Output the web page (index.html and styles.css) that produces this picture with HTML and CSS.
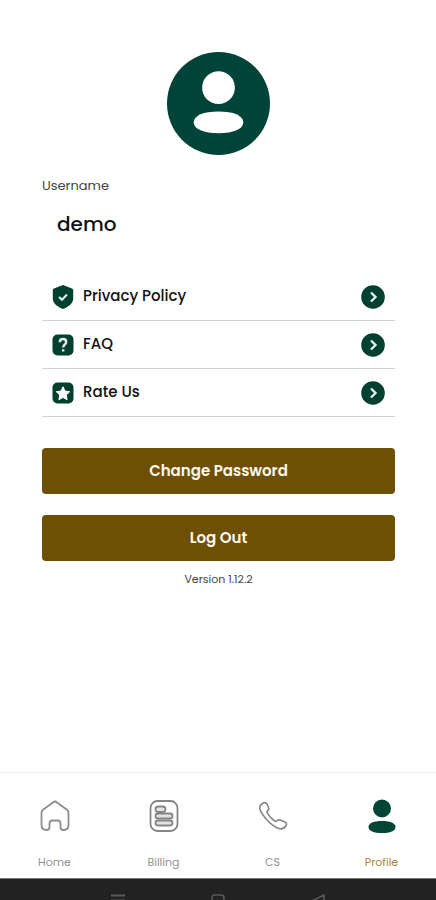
FILE: index.html
```html
<!DOCTYPE html>
<html lang="en">
<head>
<meta charset="utf-8">
<meta name="viewport" content="width=device-width, initial-scale=1">
<title>Profile</title>
<link rel="stylesheet" href="styles.css">
</head>
<body>
<main class="content">
  <svg class="avatar" viewBox="0 0 104 104" aria-hidden="true">
    <circle cx="52" cy="52" r="52" fill="#004337"/>
    <circle cx="52" cy="36" r="16.5" fill="#fff"/>
    <path d="M52 60c15 0 25 4 25 11s-10 11-25 11-25-4-25-11 10-11 25-11z" fill="#fff"/>
  </svg>
  <p class="label">Username</p>
  <h1 class="username">demo</h1>

  <ul class="menu">
    <li><a class="menu-link" href="#privacy">
      <svg class="menu-icon" viewBox="0 0 22 26" aria-hidden="true">
        <path d="M11 1l9 3.600q1.200.5 1.200 1.900v8.200c0 4.800-5 8.100-10.200 10.400C5.800 22.800.8 19.500.8 14.700V6.500Q.8 5.100 2 4.600z" fill="#00402f"/>
        <path d="M7 13l3 2.800 5-5.300" fill="none" stroke="#e4f0e7" stroke-width="2"/>
      </svg>
      <span class="menu-text">Privacy Policy</span>
      <svg class="chevron" viewBox="0 0 24 24" aria-hidden="true"><circle cx="12" cy="12" r="11.800" fill="#00402f"/><path d="M10 7.500l4.500 4.500-4.500 4.500" fill="none" stroke="#e4f0e7" stroke-width="2.400"/></svg>
    </a></li>
    <li><a class="menu-link" href="#faq">
      <svg class="menu-icon" viewBox="0 0 22 26" aria-hidden="true">
        <rect x=".5" y="2.500" width="21" height="21" rx="5" fill="#00402f"/>
        <path d="M7.800 10.200c0-2.200 1.500-3.200 3.200-3.200s3.200 1.100 3.200 2.900c0 2.400-3 2.600-3 5.600M11.200 17.200v2.300" fill="none" stroke="#e4f0e7" stroke-width="2.400"/>
      </svg>
      <span class="menu-text">FAQ</span>
      <svg class="chevron" viewBox="0 0 24 24" aria-hidden="true"><circle cx="12" cy="12" r="11.800" fill="#00402f"/><path d="M10 7.500l4.500 4.500-4.500 4.500" fill="none" stroke="#e4f0e7" stroke-width="2.400"/></svg>
    </a></li>
    <li><a class="menu-link" href="#rate">
      <svg class="menu-icon" viewBox="0 0 22 26" aria-hidden="true">
        <rect x=".5" y="2.500" width="21" height="21" rx="5" fill="#00402f"/>
        <path d="M11 6.800l2 4.300 4.700.6-3.400 3.300.8 4.700-4.100-2.300-4.100 2.300.8-4.700-3.400-3.300 4.700-.6z" fill="#fff" stroke="#fff" stroke-linejoin="round"/>
      </svg>
      <span class="menu-text">Rate Us</span>
      <svg class="chevron" viewBox="0 0 24 24" aria-hidden="true"><circle cx="12" cy="12" r="11.800" fill="#00402f"/><path d="M10 7.500l4.500 4.500-4.500 4.500" fill="none" stroke="#e4f0e7" stroke-width="2.400"/></svg>
    </a></li>
  </ul>

  <div class="actions">
    <button class="action" type="button">Change Password</button>
    <button class="action" type="button">Log Out</button>
  </div>
  <p class="version">Version 1.12.2</p>
</main>

<nav class="tabs">
  <a class="tab" href="#home">
    <svg class="tab-icon" viewBox="0 0 36 36" aria-hidden="true">
      <path d="M18 3.500Q19 3.500 20 4.500L30 11.800Q31.500 13 31.500 15V27Q31.500 32 26.500 32Q23.500 32 23.500 29V25.500Q23.500 22.500 20.500 22.500H15.500Q12.500 22.500 12.500 25.500V29Q12.500 32 9.500 32Q4.500 32 4.500 27V15Q4.500 13 6 11.800L16 4.500Q17 3.500 18 3.500Z" fill="none" stroke="#8d8d8d" stroke-width="1.800"/>
    </svg>
    <span>Home</span>
  </a>
  <a class="tab" href="#billing">
    <svg class="tab-icon" viewBox="0 0 36 36" aria-hidden="true">
      <g fill="none" stroke="#858585" stroke-width="1.800">
        <rect x="4.500" y="3" width="27" height="30" rx="7"/>
        <g fill="#e3e3e3"><rect x="9.500" y="8.500" width="10" height="5.500" rx="2.750"/>
        <rect x="9.500" y="15.500" width="17" height="5" rx="2.500"/>
        <rect x="9.500" y="22.500" width="17" height="5" rx="2.500"/></g>
      </g>
    </svg>
    <span>Billing</span>
  </a>
  <a class="tab" href="#cs">
    <svg class="tab-icon" viewBox="0 0 36 36" aria-hidden="true">
      <path d="M8 5Q10.500 3.800 12 6L13.500 9.500Q14.500 12 12.200 13.200Q11.500 14.500 14 17.500Q18.500 23 21.500 23.500Q22.500 21.500 25 22L30 24Q32.500 25.500 31 27.500Q28.500 32 24 30.500Q18 28.500 12 22Q6 15 4.800 11Q4.200 7.500 8 5Z" fill="none" stroke="#858585" stroke-width="1.600" stroke-linejoin="round"/>
    </svg>
    <span>CS</span>
  </a>
  <a class="tab tab-active" href="#profile" aria-current="page">
    <svg class="tab-icon" viewBox="0 0 36 36" aria-hidden="true">
      <circle cx="18" cy="10.500" r="9" fill="#004535"/>
      <path d="M18 23c8 0 13.500 2 13.500 6s-5.500 6-13.500 6-13.500-2-13.500-6 5.500-6 13.500-6z" fill="#004535"/>
    </svg>
    <span>Profile</span>
  </a>
</nav>

<div class="system-bar" aria-hidden="true">
  <svg class="system-icon" viewBox="0 0 14 14"><path d="M0 1.500h14M0 6.500h14M0 11.500h14" stroke="#5a5a5a" stroke-width="2"/></svg>
  <svg class="system-icon" viewBox="0 0 14 14"><rect x="1" y="1" width="12" height="12" rx="3" fill="none" stroke="#5a5a5a" stroke-width="1.500"/></svg>
  <svg class="system-icon" viewBox="0 0 14 14"><path d="M13 1v12L1 7z" fill="none" stroke="#5a5a5a" stroke-width="1.500" stroke-linejoin="round"/></svg>
</div>
</body>
</html>
```
FILE: styles.css
```css
* {
  box-sizing: border-box;
}

body {
  display: flex;
  flex-direction: column;
  min-height: 100vh;
  margin: 0;
  background: #fff;
  color: #111;
  font-family: Poppins, Inter, sans-serif;
}

a {
  color: inherit;
  text-decoration: none;
}

p,
h1,
ul {
  margin: 0;
  padding: 0;
}

.content {
  display: flex;
  flex-direction: column;
  flex: 1;
  padding: 52px 41px 24px 42px;
}

.avatar {
  align-self: center;
  width: 103px;
  height: 103px;
}

.label {
  margin-top: 21px;
  color: #444;
  font-size: 13px;
  line-height: 20px;
}

.username {
  margin-top: 12px;
  padding-left: 15px;
  font-size: 20px;
  font-weight: 500;
  line-height: 32px;
}

.menu {
  margin-top: 33px;
  list-style: none;
}

.menu-link {
  display: flex;
  align-items: center;
  gap: 9px;
  height: 48px;
  padding: 0 10px;
  border-bottom: 1px solid #d2d2d2;
  font-size: 15px;
  font-weight: 500;
}

.menu-icon {
  width: 22px;
  height: 26px;
}

.menu-text {
  flex: 1;
  padding-bottom: 2px;
}

.chevron {
  width: 24px;
  height: 24px;
}

.actions {
  display: grid;
  gap: 21px;
  margin-top: 31px;
}

.action {
  height: 46px;
  padding: 0 0 2px;
  border: 0;
  border-radius: 4px;
  background: #6d5004;
  color: #fff8ed;
  font: inherit;
  font-size: 15px;
  font-weight: 600;
}

.version {
  margin-top: 10px;
  color: #444;
  font-size: 11px;
  line-height: 16px;
  text-align: center;
}

.tabs {
  display: grid;
  grid-template-columns: repeat(4, 1fr);
  height: 106px;
  border-top: 1px solid #ededed;
}

.tab {
  display: flex;
  flex-direction: column;
  align-items: center;
  gap: 20px;
  padding-top: 25px;
  color: #929292;
  font-size: 11px;
  line-height: 16px;
}

.tab-active {
  color: #a48538;
}

.tab-icon {
  width: 36px;
  height: 36px;
}

.system-bar {
  display: flex;
  justify-content: center;
  gap: 86px;
  height: 22px;
  padding-top: 15px;
  border-top: 1px solid #777;
  background: #222;
  overflow: hidden;
}

.system-icon {
  flex: none;
  width: 14px;
  height: 14px;
}
```
